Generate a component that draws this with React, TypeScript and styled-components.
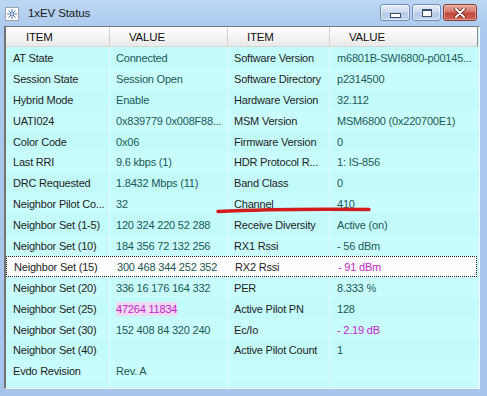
import React from "react";
import styled, { createGlobalStyle, css } from "styled-components";

type Tone = "normal" | "alert" | "marked";

interface Cell {
  label: string;
  value: string;
  tone?: Tone;
}

interface StatusRow {
  left: Cell;
  right: Cell;
}

const rows: StatusRow[] = [
  { left: { label: "AT State", value: "Connected" }, right: { label: "Software Version", value: "m6801B-SWI6800-p00145..." } },
  { left: { label: "Session State", value: "Session Open" }, right: { label: "Software Directory", value: "p2314500" } },
  { left: { label: "Hybrid Mode", value: "Enable" }, right: { label: "Hardware Version", value: "32.112" } },
  { left: { label: "UATI024", value: "0x839779 0x008F88..." }, right: { label: "MSM Version", value: "MSM6800 (0x220700E1)" } },
  { left: { label: "Color Code", value: "0x06" }, right: { label: "Firmware Version", value: "0" } },
  { left: { label: "Last RRI", value: "9.6 kbps (1)" }, right: { label: "HDR Protocol R...", value: "1: IS-856" } },
  { left: { label: "DRC Requested", value: "1.8432 Mbps (11)" }, right: { label: "Band Class", value: "0" } },
  { left: { label: "Neighbor Pilot Co...", value: "32" }, right: { label: "Channel", value: "410" } },
  { left: { label: "Neighbor Set (1-5)", value: "120 324 220 52 288" }, right: { label: "Receive Diversity", value: "Active (on)" } },
  { left: { label: "Neighbor Set (10)", value: "184 356 72 132 256" }, right: { label: "RX1 Rssi", value: "- 56 dBm" } },
  { left: { label: "Neighbor Set (15)", value: "300 468 344 252 352" }, right: { label: "RX2 Rssi", value: "- 91 dBm", tone: "alert" } },
  { left: { label: "Neighbor Set (20)", value: "336 16 176 164 332" }, right: { label: "PER", value: "8.333 %" } },
  { left: { label: "Neighbor Set (25)", value: "47264 11834", tone: "marked" }, right: { label: "Active Pilot PN", value: "128" } },
  { left: { label: "Neighbor Set (30)", value: "152 408 84 320 240" }, right: { label: "Ec/Io", value: "- 2.19 dB", tone: "alert" } },
  { left: { label: "Neighbor Set (40)", value: "" }, right: { label: "Active Pilot Count", value: "1" } },
  { left: { label: "Evdo Revision", value: "Rev. A" }, right: { label: "", value: "" } },
];

const SELECTED = 10;

const WindowIcon = () => (
  <svg width="14" height="14" viewBox="0 0 14 14">
    <rect x="0.5" y="0.5" width="13" height="13" fill="#fff" stroke="#9aa4b0" />
    <g stroke="#4b79b8" strokeWidth="1">
      <line x1="7" y1="2" x2="7" y2="12" />
      <line x1="2" y1="7" x2="12" y2="7" />
      <line x1="3.5" y1="3.5" x2="10.5" y2="10.5" />
      <line x1="10.5" y1="3.5" x2="3.5" y2="10.5" />
    </g>
    <circle cx="7" cy="7" r="1.5" fill="#fff" stroke="#7a8ea8" />
  </svg>
);

const CloseGlyph = () => (
  <svg width="12" height="10" viewBox="0 0 12 10">
    <path d="M2 1 L10 9 M10 1 L2 9" stroke="#5a1a14" strokeWidth="3.4" strokeLinecap="round" />
    <path d="M2 1 L10 9 M10 1 L2 9" stroke="#fff" strokeWidth="2" strokeLinecap="round" />
  </svg>
);

const ValueText: React.FC<{ cell: Cell }> = ({ cell }) => {
  if (cell.tone === "marked") {
    return (
      <ValueCell $tone="alert">
        <Mark>{cell.value}</Mark>
      </ValueCell>
    );
  }
  return <ValueCell $tone={cell.tone ?? "normal"}>{cell.value}</ValueCell>;
};

export default function App(): JSX.Element {
  return (
    <>
      <GlobalStyle />
      <Window>
        <TitleBar>
          <IconSlot>
            <WindowIcon />
          </IconSlot>
          <Title>1xEV Status</Title>
          <Controls>
            <CaptionButton $width={30}>
              <MinGlyph />
            </CaptionButton>
            <CaptionButton $width={29}>
              <MaxGlyph />
            </CaptionButton>
            <CaptionButton $width={34} $danger>
              <CloseGlyph />
            </CaptionButton>
          </Controls>
        </TitleBar>
        <Body>
          <ListView>
            <HeaderRow>
              <HeaderCell>ITEM</HeaderCell>
              <HeaderCell>VALUE</HeaderCell>
              <HeaderCell>ITEM</HeaderCell>
              <HeaderCell>VALUE</HeaderCell>
            </HeaderRow>
            <Rows>
              {rows.map((row, i) => (
                <Row key={i} $odd={i % 2 === 1} $selected={i === SELECTED}>
                  <ItemCell>{row.left.label}</ItemCell>
                  <ValueText cell={row.left} />
                  <ItemCell>{row.right.label}</ItemCell>
                  <ValueText cell={row.right} />
                </Row>
              ))}
              <Filler>
                <FillerCol />
                <FillerCol />
                <FillerCol />
                <FillerCol />
              </Filler>
            </Rows>
          </ListView>
        </Body>
        <Scribble width="487" height="396" viewBox="0 0 487 396">
          <path d="M218 211.5 Q 280 208.5 369 209.5" stroke="#d41c1c" strokeWidth="3.4" fill="none" strokeLinecap="round" />
        </Scribble>
      </Window>
    </>
  );
}

const GlobalStyle = createGlobalStyle`
  html, body {
    margin: 0;
    padding: 0;
    background: #a9c7ec;
  }
  body {
    font-family: "Liberation Sans", Arial, sans-serif;
  }
`;

const COLUMNS = "104px 118px 102px 1fr";

const Window = styled.div`
  position: relative;
  width: 487px;
  height: 396px;
  display: flex;
  flex-direction: column;
  background: linear-gradient(#bcd6f4 0px, #abc9ee 30px, #a7c5ec 100%);
  overflow: hidden;
`;

const TitleBar = styled.div`
  height: 26px;
  display: flex;
  align-items: center;
  padding: 0 10px 0 5px;
  flex-shrink: 0;
`;

const IconSlot = styled.div`
  width: 14px;
  height: 14px;
  display: flex;
  margin-top: 1px;
`;

const Title = styled.span`
  margin-left: 9px;
  font-size: 11.5px;
  color: #1a1a1a;
  letter-spacing: -0.1px;
`;

const Controls = styled.div`
  margin-left: auto;
  display: flex;
  gap: 2px;
  align-self: flex-start;
  margin-top: 4px;
`;

const CaptionButton = styled.div<{ $width: number; $danger?: boolean }>`
  width: ${({ $width }) => $width}px;
  height: 17px;
  box-sizing: border-box;
  border-radius: 3px;
  display: flex;
  align-items: center;
  justify-content: center;
  border: 1px solid #6f8db8;
  background: linear-gradient(#e4eefa 0%, #cddcf0 45%, #b4c9e6 55%, #c2d6ee 100%);
  box-shadow: inset 0 0 0 1px rgba(255, 255, 255, 0.55);
  ${({ $danger }) =>
    $danger &&
    css`
      border-color: #8a3a30;
      background: linear-gradient(#e8a89c 0%, #d4766a 45%, #c2463a 55%, #cd6a58 100%);
      box-shadow: inset 0 0 0 1px rgba(255, 210, 200, 0.45);
    `}
`;

const MinGlyph = styled.div`
  width: 9px;
  height: 3px;
  margin-top: 5px;
  background: #fff;
  border: 1px solid #3a4f6e;
`;

const MaxGlyph = styled.div`
  width: 8px;
  height: 5px;
  background: #fff;
  border: 1px solid #3a4f6e;
  border-top-width: 2px;
  box-shadow: inset 0 0 0 1px #fff;
`;

const Body = styled.div`
  flex: 1;
  display: flex;
  padding: 0 7px 7px 4px;
  min-height: 0;
`;

const ListView = styled.div`
  flex: 1;
  display: flex;
  flex-direction: column;
  border-top: 1px solid #7b7b7b;
  border-left: 2px solid #727272;
  border-right: 1px solid #f4f8fc;
  border-bottom: 1px solid #f4f8fc;
  box-shadow: inset 0 -1px 0 #d4d8dc;
  background: #c4fcfc;
  font-size: 11px;
  letter-spacing: -0.2px;
  overflow: hidden;
`;

const HeaderRow = styled.div`
  display: grid;
  grid-template-columns: ${COLUMNS};
  height: 19px;
  margin-right: 1px;
  background: linear-gradient(#ffffff, #f3f3f3 60%, #e9e9e9);
  border-bottom: 1px solid #d6d6d6;
  border-right: 1px solid #8a8a8a;
  flex-shrink: 0;
`;

const HeaderCell = styled.div`
  display: flex;
  align-items: center;
  padding-left: 19px;
  color: #111;
  font-size: 11.5px;
  border-right: 1px solid #d2d2d2;
  &:first-child {
    padding-left: 20px;
  }
  &:last-child {
    border-right: none;
  }
`;

const Rows = styled.div`
  flex: 1;
  display: flex;
  flex-direction: column;
`;

const Row = styled.div<{ $odd: boolean; $selected: boolean }>`
  display: grid;
  grid-template-columns: ${COLUMNS};
  height: 20.9px;
  flex-shrink: 0;
  box-sizing: border-box;
  background: ${({ $odd }) => ($odd ? "#c9fdfd" : "#c3fbfb")};
  ${({ $selected }) =>
    $selected &&
    css`
      background: #fdfdfd;
      border: 1px dotted #222;
      margin-right: 2px;
    `}
`;

const cellBase = css`
  display: flex;
  align-items: center;
  padding-left: 6px;
  padding-top: 1px;
  white-space: nowrap;
  overflow: hidden;
  border-right: 1px solid rgba(236, 255, 255, 0.75);
`;

const ItemCell = styled.div`
  ${cellBase}
  color: #1e1e1e;
  &:first-child {
    padding-left: 7px;
  }
`;

const ValueCell = styled.div<{ $tone: Tone }>`
  ${cellBase}
  color: ${({ $tone }) => ($tone === "alert" ? "#c21fc6" : "#1b5856")};
  &:last-child {
    padding-left: 7px;
    border-right: none;
  }
`;

const Mark = styled.span`
  background: #efd9f5;
  padding: 1px 0;
`;

const Filler = styled.div`
  flex: 1;
  display: grid;
  grid-template-columns: ${COLUMNS};
  background: #c6fcfc;
`;

const FillerCol = styled.div`
  border-right: 1px solid rgba(236, 255, 255, 0.75);
  &:last-child {
    border-right: none;
  }
`;

const Scribble = styled.svg`
  position: absolute;
  left: 0;
  top: 0;
  pointer-events: none;
`;
